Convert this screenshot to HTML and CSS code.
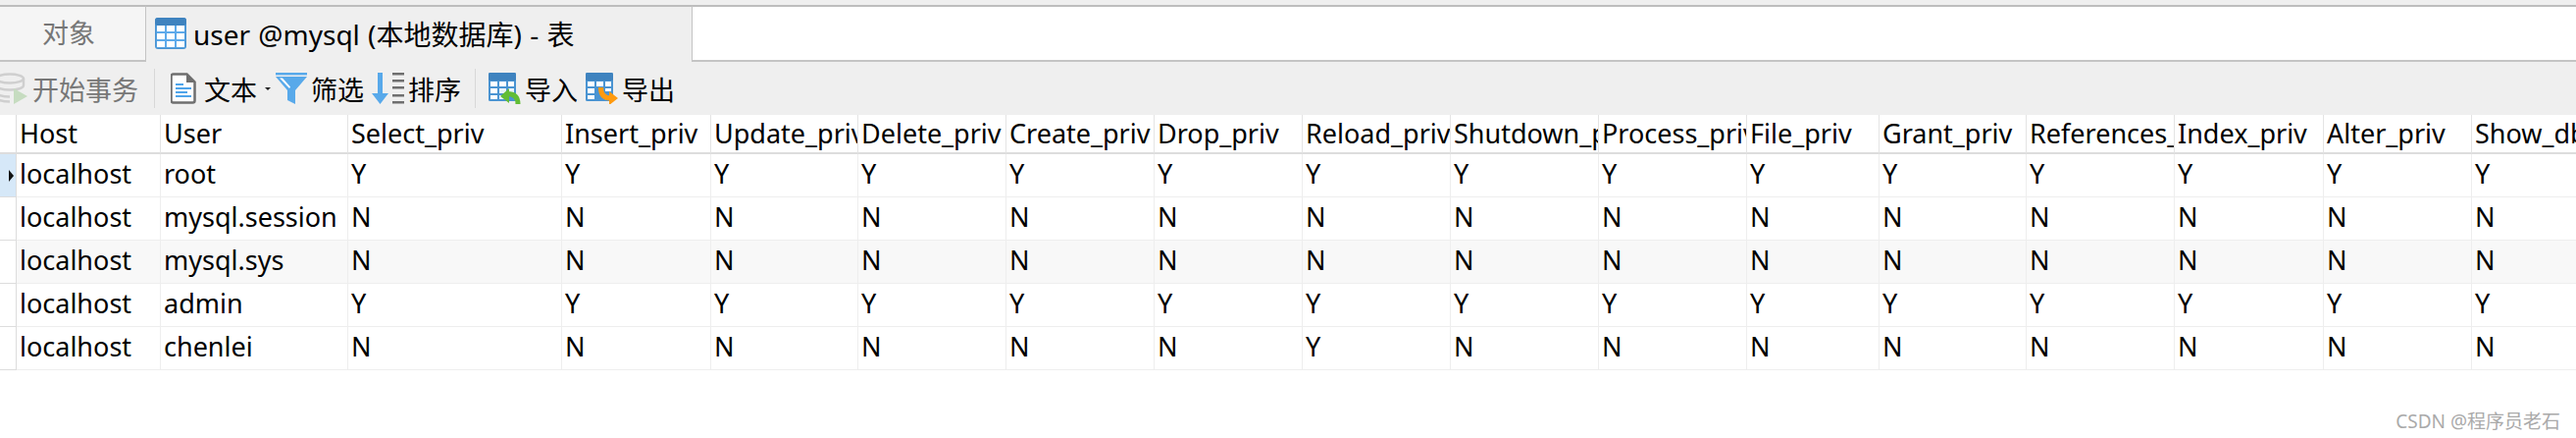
FILE: index.html
```html
<!DOCTYPE html>
<html lang="zh-CN">
<head>
    <meta charset="UTF-8">
    <title>user @mysql (本地数据库) - 表</title>
    <link rel="stylesheet" href="styles.css">
</head>
<body>
    <!-- Tabs -->
    <div class="tabbar">
        <div class="tab tab-objects">对象</div>
        <div class="tab tab-active">
            <svg class="tab-icon" width="32" height="32" viewBox="0 0 32 32">
                <rect width="32" height="32" rx="3" fill="#4a94d2"/>
                <rect width="32" height="8" rx="3" fill="#3f83bf"/>
                <rect x="1.500" y="8" width="29" height="22.500" fill="#5eaaea"/>
                <path d="M2 8h8v6H2zM12 8h8v6h-8zM22 8h8v6h-8zM2 16h8v6H2zM12 16h8v6h-8zM22 16h8v6h-8zM2 24h8v6H2zM12 24h8v6h-8zM22 24h8v6h-8z" fill="#fff"/>
            </svg>
            <span>user @mysql (本地数据库) - 表</span>
        </div>
        <div class="tab-rest"></div>
    </div>

    <!-- Toolbar -->
    <div class="toolbar">
        <div class="tool tool-disabled tool-begin">
            <svg width="28" height="32" viewBox="0 0 28 32">
                <g fill="none" stroke="#cfcfcf" stroke-width="2.500">
                    <ellipse cx="10" cy="6" rx="14" ry="4.500"/>
                    <path d="M-4 6v19c0 2.500 6 4.500 14 4.500M24 6v7M-4 13c0 2.500 6 4.500 14 4.500s14-2 14-4.500M-4 20c0 2.500 6 4.500 14 4.500"/>
                </g>
                <path d="M14 16l14 8-14 8z" fill="#c6dcc0"/>
            </svg>
            <span>开始事务</span>
        </div>
        <div class="sep"></div>
        <div class="tool tool-text">
            <svg width="26" height="32" viewBox="0 0 26 32">
                <path d="M2.500 1.500h14l8 8v19a2 2 0 0 1-2 2h-20a2 2 0 0 1-2-2v-25a2 2 0 0 1 2-2z" fill="#fff" stroke="#6f6f6f" stroke-width="2.500"/>
                <path d="M16 1l9 9h-9z" fill="#6f6f6f"/>
                <path d="M5 11h8v2H5zM5 15h16v2H5zM5 19h12v2H5zM5 23h16v2H5z" fill="#4ea4ea"/>
            </svg>
            <span>文本</span>
            <i class="caret"></i>
        </div>
        <div class="tool tool-filter">
            <svg width="32" height="32" viewBox="0 0 32 32">
                <path d="M0 0h32v2.500H0z" fill="#58a9ea"/>
                <path d="M0 4h32L20 18v14l-8-4V18z" fill="#58a9ea"/>
                <path d="M4 5.500l3 0 8 9-1 1.500z" fill="#fff"/>
            </svg>
            <span>筛选</span>
        </div>
        <div class="tool tool-sort">
            <svg width="33" height="32" viewBox="0 0 33 32">
                <path d="M6 0h5v21h6L8.500 32 0 21h6z" fill="#58a9ea"/>
                <path d="M21 0h12v2.500H21zM21 7h12v2.500H21zM21 14h12v2.500H21zM21 22h12v2.500H21zM21 29h12v2.500H21z" fill="#6f6f6f"/>
            </svg>
            <span>排序</span>
        </div>
        <div class="sep"></div>
        <div class="tool tool-import">
            <svg width="33" height="32" viewBox="0 0 33 32">
                <rect width="28" height="29" rx="1.500" fill="#4a94d2"/>
                <rect width="28" height="8" rx="1.500" fill="#3f83bf"/>
                <path d="M2 9h7v5H2zM11 9h7v5h-7zM20 9h6v5h-6zM2 16h7v5H2zM2 23h7v4H2z" fill="#fff"/>
                <path d="M11 16h7v5h-7zM20 16h6v5h-6zM11 23h7v4h-7z" fill="#e9f3fb"/>
                <path d="M12 24l9-8v15z" fill="#62bd35"/>
                <path d="M19 21.500c8 0 11 4 11 10.500" fill="none" stroke="#62bd35" stroke-width="5"/>
            </svg>
            <span>导入</span>
        </div>
        <div class="tool tool-export">
            <svg width="33" height="32" viewBox="0 0 33 32">
                <rect width="28" height="29" rx="1.500" fill="#4a94d2"/>
                <rect width="28" height="8" rx="1.500" fill="#3f83bf"/>
                <path d="M2 9h7v5H2zM11 9h7v5h-7zM20 9h6v5h-6zM2 16h7v5H2zM20 16h6v3h-6zM2 23h7v4H2z" fill="#fff"/>
                <path d="M15.500 15c0 7 3 11 10 11" fill="none" stroke="#ff9a0e" stroke-width="5"/>
                <path d="M33 26l-9-7v14z" fill="#ff9a0e"/>
            </svg>
            <span>导出</span>
        </div>
    </div>

    <!-- Data grid -->
    <div class="grid-wrap">
        <table class="grid">
            <colgroup>
                <col class="c-mark"><col class="c-host"><col class="c-user"><col class="c-select"><col class="c-insert">
                <col class="c-150"><col class="c-151"><col class="c-151"><col class="c-151"><col class="c-151"><col class="c-151"><col class="c-151">
                <col class="c-file"><col class="c-150"><col class="c-151"><col class="c-152"><col class="c-151"><col class="c-151">
            </colgroup>
            <thead>
                <tr>
                    <th class="mark"></th>
                    <th>Host</th><th>User</th><th>Select_priv</th><th>Insert_priv</th><th>Update_priv</th><th>Delete_priv</th><th>Create_priv</th><th>Drop_priv</th><th>Reload_priv</th><th>Shutdown_priv</th><th>Process_priv</th><th>File_priv</th><th>Grant_priv</th><th>References_priv</th><th>Index_priv</th><th>Alter_priv</th><th>Show_db_priv</th>
                </tr>
            </thead>
            <tbody>
                <tr>
                    <td class="mark mark-current"><i class="arrow"></i></td>
                    <td>localhost</td><td>root</td><td>Y</td><td>Y</td><td>Y</td><td>Y</td><td>Y</td><td>Y</td><td>Y</td><td>Y</td><td>Y</td><td>Y</td><td>Y</td><td>Y</td><td>Y</td><td>Y</td><td>Y</td>
                </tr>
                <tr>
                    <td class="mark"></td>
                    <td>localhost</td><td>mysql.session</td><td>N</td><td>N</td><td>N</td><td>N</td><td>N</td><td>N</td><td>N</td><td>N</td><td>N</td><td>N</td><td>N</td><td>N</td><td>N</td><td>N</td><td>N</td>
                </tr>
                <tr class="alt">
                    <td class="mark"></td>
                    <td>localhost</td><td>mysql.sys</td><td>N</td><td>N</td><td>N</td><td>N</td><td>N</td><td>N</td><td>N</td><td>N</td><td>N</td><td>N</td><td>N</td><td>N</td><td>N</td><td>N</td><td>N</td>
                </tr>
                <tr>
                    <td class="mark"></td>
                    <td>localhost</td><td>admin</td><td>Y</td><td>Y</td><td>Y</td><td>Y</td><td>Y</td><td>Y</td><td>Y</td><td>Y</td><td>Y</td><td>Y</td><td>Y</td><td>Y</td><td>Y</td><td>Y</td><td>Y</td>
                </tr>
                <tr>
                    <td class="mark"></td>
                    <td>localhost</td><td>chenlei</td><td>N</td><td>N</td><td>N</td><td>N</td><td>N</td><td>N</td><td>Y</td><td>N</td><td>N</td><td>N</td><td>N</td><td>N</td><td>N</td><td>N</td><td>N</td>
                </tr>
            </tbody>
        </table>
    </div>

    <div class="watermark">CSDN @程序员老石</div>
</body>
</html>
```

FILE: styles.css
```css
html, body {
    height: 100%;
}
body {
    margin: 0;
    background: #fff;
    color: #000;
    font-family: "Noto Sans", "Noto Sans CJK SC", sans-serif;
    font-size: 27px;
    overflow: hidden;
    position: relative;
}

/* tabs */
.tabbar {
    display: flex;
    height: 63px;
    box-sizing: border-box;
    padding-top: 5px;
    background: #efefef;
}
.tab {
    display: flex;
    align-items: center;
    box-sizing: border-box;
    border-top: 2px solid #bdbdbd;
}
.tab-objects {
    width: 149px;
    padding-left: 43px;
    padding-bottom: 3px;
    color: #777;
    background: #f5f5f5;
    border-right: 1px solid #c4c4c4;
    border-bottom: 2px solid #c4c4c4;
}
.tab-active {
    width: 556px;
    padding-left: 9px;
    padding-bottom: 3px;
    background: #efefef;
    font-size: 28px;
    word-spacing: 1px;
}
.tab-icon {
    margin-right: 7px;
}
.tab-rest {
    flex: 1;
    background: #fff;
    border-top: 2px solid #bdbdbd;
    border-left: 1px solid #c4c4c4;
    border-bottom: 2px solid #c4c4c4;
}

/* toolbar */
.toolbar {
    display: flex;
    align-items: center;
    height: 54px;
    background: #efefef;
}
.tool {
    display: flex;
    align-items: center;
    gap: 4px;
}
.tool svg {
    overflow: hidden;
}
.tool-disabled {
    color: #777;
}
.tool-begin {
    width: 157px;
    gap: 5px;
}
.tool-text {
    width: 107px;
    margin-left: 16px;
    gap: 8px;
}
.tool-filter {
    width: 98px;
}
.tool-sort {
    width: 105px;
}
.tool-import {
    width: 99px;
    margin-left: 13px;
}
.sep {
    width: 1px;
    height: 40px;
    background: #d8d8d8;
}
.caret {
    width: 0;
    height: 0;
    border-left: 3px solid transparent;
    border-right: 3px solid transparent;
    border-top: 3px solid #222;
}

/* grid */
.grid-wrap {
    overflow: hidden;
}
.grid {
    width: 2671px;
    table-layout: fixed;
    border-collapse: separate;
    border-spacing: 0;
}
.c-mark { width: 17px; }
.c-host { width: 147px; }
.c-user { width: 191px; }
.c-select { width: 218px; }
.c-insert { width: 152px; }
.c-150 { width: 150px; }
.c-151 { width: 151px; }
.c-152 { width: 152px; }
.c-file { width: 135px; }
.grid th, .grid td {
    box-sizing: border-box;
    padding: 0 0 0 3px;
    overflow: hidden;
    white-space: nowrap;
    text-align: left;
    font-weight: normal;
    font-size: 27px;
    line-height: 30px;
    border-right: 1px solid #eeeeee;
    border-bottom: 1px solid #eeeeee;
}
.grid th {
    height: 40px;
    padding-bottom: 1px;
    border-right-color: #e4e4e4;
    border-bottom: 2px solid #dddddd;
}
.grid td {
    height: 44px;
    padding-bottom: 4px;
}
.alt td {
    background: #f8f8f8;
}
.grid .mark {
    padding: 0;
    background: #fff;
    border-right-color: #dddddd;
    border-bottom-color: #dddddd;
}
.grid .mark-current {
    background: #d6e8f8;
}
.arrow {
    display: block;
    width: 0;
    height: 0;
    margin-left: 9px;
    border-top: 6px solid transparent;
    border-bottom: 6px solid transparent;
    border-left: 5px solid #111;
}

.watermark {
    position: absolute;
    right: 16px;
    top: 414px;
    font-size: 19px;
    color: #aaaaaa;
}
```
